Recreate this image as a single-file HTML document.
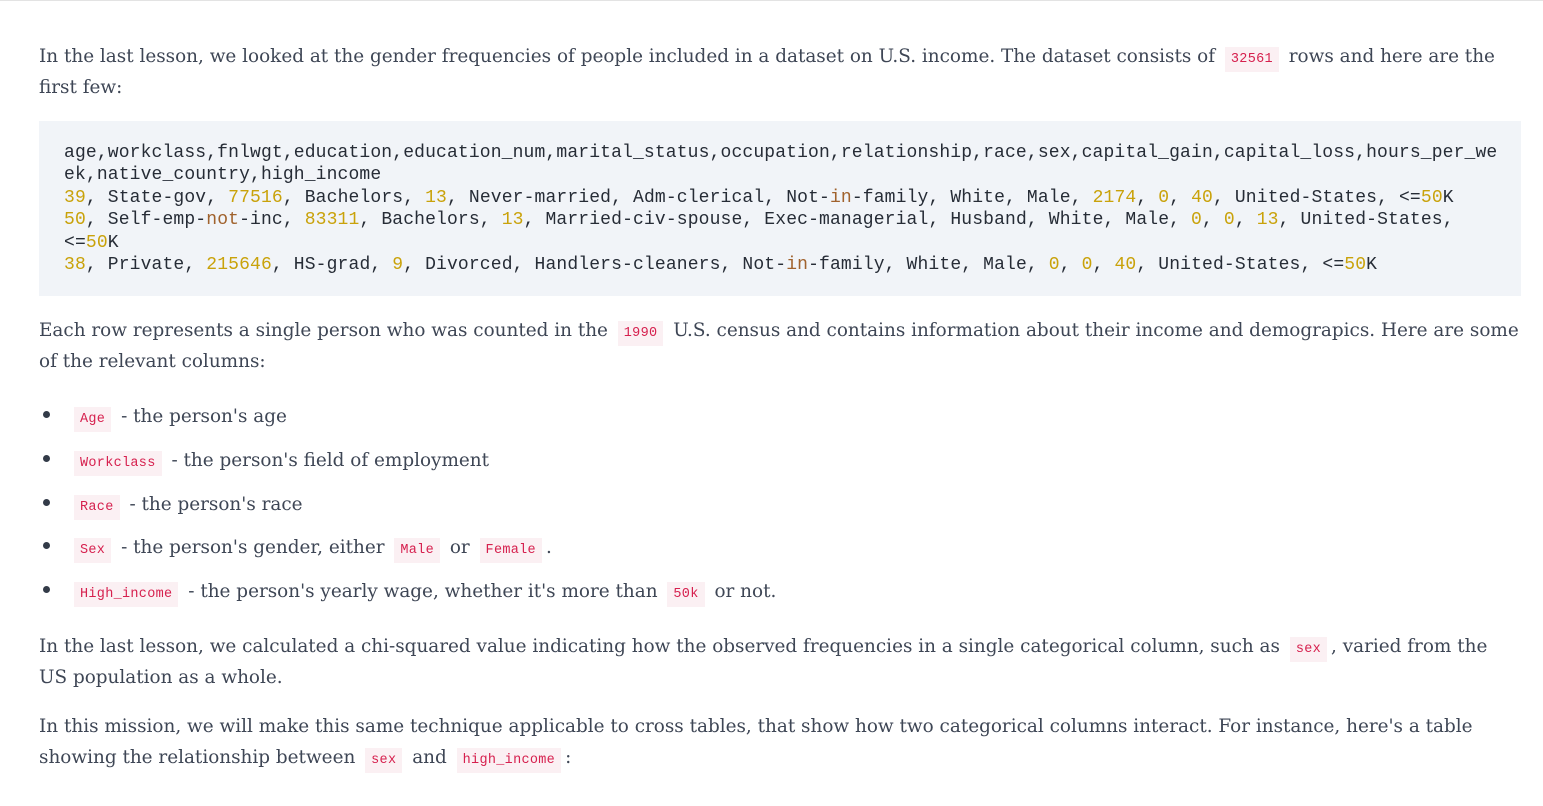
<!DOCTYPE html>
<html><head><meta charset="utf-8"><style>
html,body{margin:0;padding:0;background:#fff;width:1543px;height:806px;overflow:hidden}
body{border-top:1px solid #e3e3e3;box-sizing:border-box;font-family:"DejaVu Serif","Liberation Serif",serif;font-size:18.4px;color:#3e4655;letter-spacing:0}
.p{position:absolute;left:39px;white-space:nowrap;line-height:31px}
code{font-family:"Liberation Mono",monospace;font-size:13.5px;line-height:1;color:#d6204e;background:#fbf0f3;padding:5px 6px;letter-spacing:0.3px;margin:0 4px}
pre{position:absolute;left:39px;top:121px;width:1482px;height:175px;margin:0;background:#f1f4f8;box-sizing:border-box;padding:21px 25px;font-family:"Liberation Mono",monospace;font-size:18px;letter-spacing:0.14px;line-height:22.4px;color:#262c36}
.n{color:#c9a20a}.k{color:#a0622d}
.b{position:absolute;left:43px;width:7px;height:7px;border-radius:50%;background:#333b48}
</style></head><body>
<div class="p" style="top:41px">In the last lesson, we looked at the gender frequencies of people included in a dataset on U.S. income. The dataset consists of <code>32561</code> rows and here are the<br>first few:</div>
<pre>age,workclass,fnlwgt,education,education_num,marital_status,occupation,relationship,race,sex,capital_gain,capital_loss,hours_per_we
ek,native_country,high_income
<span class="n">39</span>, State-gov, <span class="n">77516</span>, Bachelors, <span class="n">13</span>, Never-married, Adm-clerical, Not-<span class="k">in</span>-family, White, Male, <span class="n">2174</span>, <span class="n">0</span>, <span class="n">40</span>, United-States, &lt;=<span class="n">50</span>K
<span class="n">50</span>, Self-emp-<span class="k">not</span>-inc, <span class="n">83311</span>, Bachelors, <span class="n">13</span>, Married-civ-spouse, Exec-managerial, Husband, White, Male, <span class="n">0</span>, <span class="n">0</span>, <span class="n">13</span>, United-States,
&lt;=<span class="n">50</span>K
<span class="n">38</span>, Private, <span class="n">215646</span>, HS-grad, <span class="n">9</span>, Divorced, Handlers-cleaners, Not-<span class="k">in</span>-family, White, Male, <span class="n">0</span>, <span class="n">0</span>, <span class="n">40</span>, United-States, &lt;=<span class="n">50</span>K</pre>
<div class="p" style="top:315px">Each row represents a single person who was counted in the <code>1990</code> U.S. census and contains information about their income and demograpics. Here are some<br>of the relevant columns:</div>
<div class="b" style="top:411px"></div><div class="p" style="top:401px;left:70px"><code>Age</code> - the person's age</div>
<div class="b" style="top:455px"></div><div class="p" style="top:445px;left:70px"><code>Workclass</code> - the person's field of employment</div>
<div class="b" style="top:499px"></div><div class="p" style="top:489px;left:70px"><code>Race</code> - the person's race</div>
<div class="b" style="top:542px"></div><div class="p" style="top:532px;left:70px"><code>Sex</code> - the person's gender, either <code>Male</code> or <code>Female</code>.</div>
<div class="b" style="top:586px"></div><div class="p" style="top:576px;left:70px"><code>High_income</code> - the person's yearly wage, whether it's more than <code>50k</code> or not.</div>
<div class="p" style="top:631px">In the last lesson, we calculated a chi-squared value indicating how the observed frequencies in a single categorical column, such as <code>sex</code>, varied from the<br>US population as a whole.</div>
<div class="p" style="top:711px">In this mission, we will make this same technique applicable to cross tables, that show how two categorical columns interact. For instance, here's a table<br>showing the relationship between <code>sex</code> and <code>high_income</code>:</div>
</body></html>
